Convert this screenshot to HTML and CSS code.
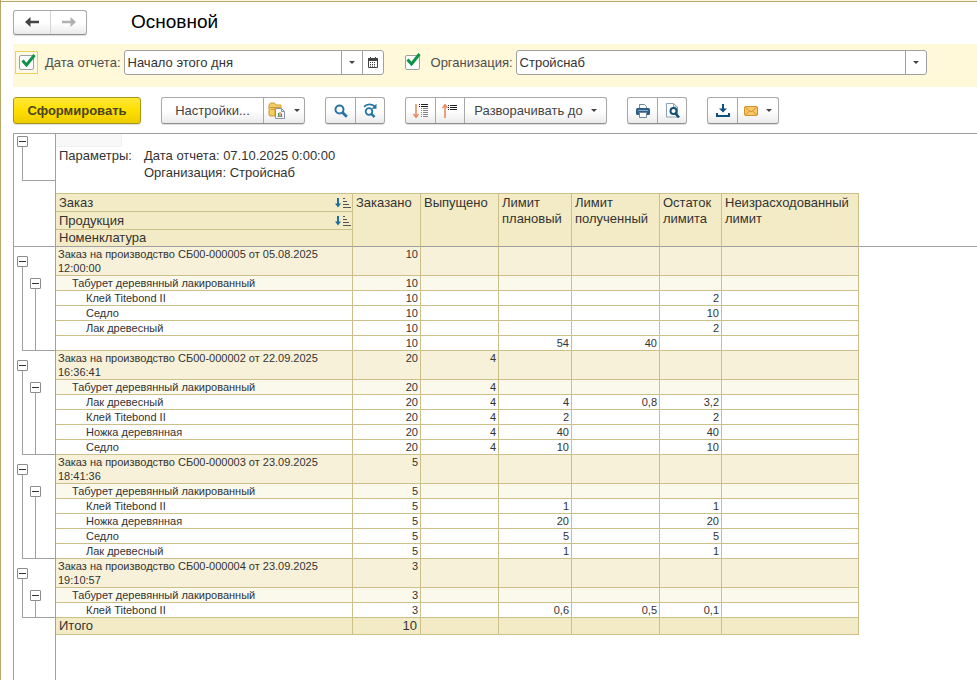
FILE: index.html
```html
<!DOCTYPE html>
<html lang="ru">
<head>
<meta charset="utf-8">
<title>Основной</title>
<link rel="stylesheet" href="styles.css">
</head>
<body>
<main class="window">
  <header class="titlebar">
    <div class="btn-group nav">
      <button type="button" aria-label="Назад"><svg width="14" height="10" viewBox="0 0 14 10"><path d="M0 5 5.500 0v3.700H14v2.600H5.500V10z" fill="#444"/></svg></button>
      <button type="button" aria-label="Вперед" disabled><svg width="14" height="10" viewBox="0 0 14 10"><path d="M14 5 8.500 0v3.700H0v2.600h8.500V10z" fill="#b0b0b0"/></svg></button>
    </div>
    <h1>Основной</h1>
  </header>

  <form class="filters">
    <span class="check focused"><input type="checkbox" id="use-date" checked aria-label="Использовать дату"><svg class="tick" width="15" height="13" viewBox="0 0 15 13"><path d="M1.500 6.500 5.500 11 13.500 1" fill="none" stroke="#0e9347" stroke-width="3"/></svg></span>
    <label for="date">Дата отчета:</label>
    <div class="field date-field">
      <input type="text" id="date" value="Начало этого дня">
      <button type="button" aria-label="Выбрать"><i class="caret"></i></button>
      <button type="button" aria-label="Календарь"><svg width="10" height="11" viewBox="0 0 10 11"><path d="M.5 1.500h9v9h-9z" fill="#fff" stroke="#444"/><path d="M0 1h10v3H0zM2 0h1v2H2zM7 0h1v2H7z" fill="#444"/><path d="M2 5.500h6M2 7.500h6M2 9.200h6" stroke="#444" stroke-dasharray="1 1"/></svg></button>
    </div>
    <span class="check"><input type="checkbox" id="use-org" checked aria-label="Использовать организацию"><svg class="tick" width="15" height="13" viewBox="0 0 15 13"><path d="M1.500 6.500 5.500 11 13.500 1" fill="none" stroke="#0e9347" stroke-width="3"/></svg></span>
    <label for="org">Организация:</label>
    <div class="field org-field">
      <input type="text" id="org" value="Стройснаб">
      <button type="button" aria-label="Выбрать организацию"><i class="caret"></i></button>
    </div>
  </form>

  <div class="toolbar">
    <button type="button" class="primary">Сформировать</button>
    <div class="btn-group">
      <button type="button" class="settings">Настройки...</button>
      <button type="button" class="menu" aria-label="Варианты отчета"><svg width="18" height="17" viewBox="0 0 18 17"><path d="M1 13V3l1.500-2h4L8 3h5v3H7v8H2z" fill="#f3cc62" stroke="#cf9a34"/><path d="M1.500 5.500H12M3 7.500h4" stroke="#cf9a34"/><path d="M7.500 6.500h6l3 3v7h-9z" fill="#fff" stroke="#8292a4"/><path d="M13.500 6.500v3h3" fill="none" stroke="#8292a4"/><path d="M9.500 14.500h5" stroke="#888"/><path d="M10 11h1v3h-1z" fill="#3b9b55"/><path d="M11.500 10h1v4h-1z" fill="#d64b3b"/><path d="M13 11.500h1V14h-1z" fill="#d64b3b"/></svg><i class="caret"></i></button>
    </div>
    <div class="btn-group">
      <button type="button" class="icon" aria-label="Найти"><svg width="14" height="14" viewBox="0 0 14 14"><circle cx="5.500" cy="5.500" r="4" fill="none" stroke="#2673a5" stroke-width="2"/><path d="m8.500 8.500 4.300 4.300" stroke="#2673a5" stroke-width="2.800"/></svg></button>
      <button type="button" class="icon" aria-label="Найти далее"><svg width="15" height="15" viewBox="0 0 15 15"><circle cx="6" cy="8.500" r="3.300" fill="none" stroke="#2673a5" stroke-width="1.800"/><path d="m8.300 10.800 3.300 3.300" stroke="#2673a5" stroke-width="2.400"/><path d="M1 3.800C4 .5 9 .5 12 3.700" fill="none" stroke="#2673a5" stroke-width="1.800"/><path d="M13.500 .8v5h-5z" fill="#2673a5"/></svg></button>
    </div>
    <div class="btn-group">
      <button type="button" class="icon" aria-label="Развернуть"><svg width="16" height="16" viewBox="0 0 16 16"><path d="M3 1v13" stroke="#e9825a" stroke-width="1.500"/><path d="m.5 11 2.500 3.500L5.500 11" fill="none" stroke="#e9825a" stroke-width="1.300"/><path d="M6 1.500h1M8 1.500h7M6 3.500h1M8 3.500h7" stroke="#222"/><path d="M8 5.500h1M10 5.500h5M8 7.500h1M10 7.500h5M8 9.500h1M10 9.500h5M8 11.500h1M10 11.500h5M8 13.500h1M10 13.500h5" stroke="#888"/></svg></button>
      <button type="button" class="icon" aria-label="Свернуть"><svg width="16" height="16" viewBox="0 0 16 16"><path d="M3 2v13" stroke="#e9825a" stroke-width="1.500"/><path d="M.5 5 3 1.500 5.500 5" fill="none" stroke="#e9825a" stroke-width="1.300"/><path d="M6 2.500h1M8 2.500h7M6 4.500h1M8 4.500h7M6 6.500h1M8 6.500h7" stroke="#222"/></svg></button>
      <button type="button" class="expand">Разворачивать до<i class="caret"></i></button>
    </div>
    <div class="btn-group">
      <button type="button" class="icon" aria-label="Печать"><svg width="14" height="14" viewBox="0 0 14 14"><path d="M3.500 5V.5h5l2 2V5" fill="#fff" stroke="#718698"/><rect y="4" width="14" height="7" rx="1.500" fill="#2f5f8a"/><path d="M2 6.500h10" stroke="#8eabc4"/><path d="M3.500 8.500h7v5h-7z" fill="#fff" stroke="#718698"/></svg></button>
      <button type="button" class="icon" aria-label="Просмотр"><svg width="15" height="15" viewBox="0 0 15 15"><path d="M1.500 .5h7l4 3.500v10h-11z" fill="#fff" stroke="#8da0b2"/><path d="M8.500 .5V4h4" fill="none" stroke="#8da0b2"/><circle cx="8.500" cy="8" r="3" fill="#fff" stroke="#0f5078" stroke-width="2"/><path d="m10.500 10.500 3.500 4" stroke="#0f5078" stroke-width="2.500"/></svg></button>
    </div>
    <div class="btn-group">
      <button type="button" class="icon" aria-label="Сохранить"><svg width="14" height="13" viewBox="0 0 14 13"><path d="M7 0v7" stroke="#0f5078" stroke-width="2"/><path d="M3 4.500h8L7 8.500z" fill="#0f5078"/><path d="M1 9v3h12V9" fill="none" stroke="#0f5078" stroke-width="2"/></svg></button>
      <button type="button" class="menu" aria-label="Отправить"><svg width="14" height="10" viewBox="0 0 14 10"><rect x=".5" y=".5" width="13" height="9" rx="1" fill="#f8c869" stroke="#d78f2c"/><path d="m1 1 6 5 6-5M1 9l4.500-4M13 9 8.500 5" fill="none" stroke="#d78f2c"/></svg><i class="caret"></i></button>
    </div>
  </div>

  <section class="sheet">
    <div class="gutter">
      <div class="branch params-branch"><button type="button" class="toggle" aria-label="Свернуть"></button><div class="stem"></div></div>
      <div class="branch" style="--rows:5"><button type="button" class="toggle" aria-label="Свернуть"></button><div class="stem"><button type="button" class="toggle" aria-label="Свернуть"></button><div class="twig"></div></div></div>
      <div class="branch" style="--rows:5"><button type="button" class="toggle" aria-label="Свернуть"></button><div class="stem"><button type="button" class="toggle" aria-label="Свернуть"></button><div class="twig"></div></div></div>
      <div class="branch" style="--rows:5"><button type="button" class="toggle" aria-label="Свернуть"></button><div class="stem"><button type="button" class="toggle" aria-label="Свернуть"></button><div class="twig"></div></div></div>
      <div class="branch" style="--rows:2"><button type="button" class="toggle" aria-label="Свернуть"></button><div class="stem"><button type="button" class="toggle" aria-label="Свернуть"></button><div class="twig"></div></div></div>
    </div>
    <div class="content">
      <div class="cursor"></div>
      <dl class="params">
        <dt>Параметры:</dt>
        <dd>Дата отчета: 07.10.2025 0:00:00</dd>
        <dd>Организация: Стройснаб</dd>
      </dl>
      <table>
        <colgroup><col class="c-name"><col class="c-ordered"><col class="c-released"><col class="c-plan"><col class="c-got"><col class="c-rest"><col class="c-unspent"><col></colgroup>
        <thead>
          <tr><th><div class="sortable">Заказ<svg width="16" height="12" viewBox="0 0 16 12"><path d="M3 1v7" stroke="#1f6f99" stroke-width="2"/><path d="M0 6.500h6L3 10.500z" fill="#1f6f99"/><path d="M8 1.500h2M8 4.500h4M8 7.500h6M8 10.500h8" stroke="#555"/></svg></div></th><th rowspan="3">Заказано</th><th rowspan="3">Выпущено</th><th rowspan="3">Лимит плановый</th><th rowspan="3">Лимит полученный</th><th rowspan="3">Остаток лимита</th><th rowspan="3">Неизрасходованный лимит</th><td rowspan="3" class="filler"></td></tr>
          <tr><th><div class="sortable">Продукция<svg width="16" height="12" viewBox="0 0 16 12"><path d="M3 1v7" stroke="#1f6f99" stroke-width="2"/><path d="M0 6.500h6L3 10.500z" fill="#1f6f99"/><path d="M8 1.500h2M8 4.500h4M8 7.500h6M8 10.500h8" stroke="#555"/></svg></div></th></tr>
          <tr><th>Номенклатура</th></tr>
        </thead>
        <tbody>
          <tr class="order"><td>Заказ на производство СБ00-000005 от 05.08.2025 12:00:00</td><td>10</td><td></td><td></td><td></td><td></td><td></td></tr>
          <tr class="product"><td>Табурет деревянный лакированный</td><td>10</td><td></td><td></td><td></td><td></td><td></td></tr>
          <tr><td>Клей Titebond II</td><td>10</td><td></td><td></td><td></td><td>2</td><td></td></tr>
          <tr><td>Седло</td><td>10</td><td></td><td></td><td></td><td>10</td><td></td></tr>
          <tr><td>Лак древесный</td><td>10</td><td></td><td></td><td></td><td>2</td><td></td></tr>
          <tr><td></td><td>10</td><td></td><td>54</td><td>40</td><td></td><td></td></tr>
        </tbody>
        <tbody>
          <tr class="order"><td>Заказ на производство СБ00-000002 от 22.09.2025 16:36:41</td><td>20</td><td>4</td><td></td><td></td><td></td><td></td></tr>
          <tr class="product"><td>Табурет деревянный лакированный</td><td>20</td><td>4</td><td></td><td></td><td></td><td></td></tr>
          <tr><td>Лак древесный</td><td>20</td><td>4</td><td>4</td><td>0,8</td><td>3,2</td><td></td></tr>
          <tr><td>Клей Titebond II</td><td>20</td><td>4</td><td>2</td><td></td><td>2</td><td></td></tr>
          <tr><td>Ножка деревянная</td><td>20</td><td>4</td><td>40</td><td></td><td>40</td><td></td></tr>
          <tr><td>Седло</td><td>20</td><td>4</td><td>10</td><td></td><td>10</td><td></td></tr>
        </tbody>
        <tbody>
          <tr class="order"><td>Заказ на производство СБ00-000003 от 23.09.2025 18:41:36</td><td>5</td><td></td><td></td><td></td><td></td><td></td></tr>
          <tr class="product"><td>Табурет деревянный лакированный</td><td>5</td><td></td><td></td><td></td><td></td><td></td></tr>
          <tr><td>Клей Titebond II</td><td>5</td><td></td><td>1</td><td></td><td>1</td><td></td></tr>
          <tr><td>Ножка деревянная</td><td>5</td><td></td><td>20</td><td></td><td>20</td><td></td></tr>
          <tr><td>Седло</td><td>5</td><td></td><td>5</td><td></td><td>5</td><td></td></tr>
          <tr><td>Лак древесный</td><td>5</td><td></td><td>1</td><td></td><td>1</td><td></td></tr>
        </tbody>
        <tbody>
          <tr class="order"><td>Заказ на производство СБ00-000004 от 23.09.2025 19:10:57</td><td>3</td><td></td><td></td><td></td><td></td><td></td></tr>
          <tr class="product"><td>Табурет деревянный лакированный</td><td>3</td><td></td><td></td><td></td><td></td><td></td></tr>
          <tr><td>Клей Titebond II</td><td>3</td><td></td><td>0,6</td><td>0,5</td><td>0,1</td><td></td></tr>
        </tbody>
        <tfoot>
          <tr><td>Итого</td><td>10</td><td></td><td></td><td></td><td></td><td></td></tr>
        </tfoot>
      </table>
    </div>
  </section>
</main>
</body>
</html>
```
FILE: styles.css
```css
:root {
  --line: #a0a0a0;
  --grid: #cbc08a;
  --text: #333;
}

* { box-sizing: border-box; }

body {
  margin: 0;
  background: #fff;
  color: var(--text);
  font: 13px/16px "Liberation Sans", Arial, sans-serif;
}

button, input { font: inherit; color: inherit; }
svg { display: block; flex: none; }

.window {
  display: flex;
  flex-direction: column;
  min-height: 100vh;
  padding: 8px 0 0 12px;
  border-left: 1px solid #b5a76c;
  background: linear-gradient(#fbf6df 1px, #b5a76c 1px 2px, #fff 2px);
}

.titlebar {
  display: flex;
  align-items: center;
  gap: 44px;
  height: 28px;
}

h1 {
  margin: 0;
  color: #000;
  font-size: 19px;
  font-weight: normal;
  line-height: 24px;
}

.btn-group {
  display: flex;
  border: 1px solid #a8a8a8;
  border-bottom-color: #8e8e8e;
  border-radius: 3px;
  background: linear-gradient(#fff 50%, #ebebeb);
  box-shadow: 0 1px 1px #ddd;
}

.btn-group button {
  display: flex;
  align-items: center;
  justify-content: center;
  height: 25px;
  padding: 0;
  border: 0;
  background: none;
}

.btn-group button + button { border-left: 1px solid #a8a8a8; }
.btn-group.nav button { width: 36px; height: 23px; }
.btn-group.nav button + button { border-left-color: #d4d4d4; }

.filters {
  display: flex;
  align-items: center;
  height: 43px;
  margin-top: 8px;
  padding: 0 50px 6px 2px;
  background: #fff8d9;
}

.check {
  position: relative;
  display: flex;
  align-items: center;
  justify-content: center;
  width: 23px;
  height: 23px;
}

.check.focused { border: 1px solid #e8d25c; background: #fffbe6; }

.check input {
  appearance: none;
  width: 15px;
  height: 15px;
  margin: 0;
  border: 1px solid #a0a0a0;
  border-radius: 2px;
  background: #fff;
}

.tick {
  position: absolute;
  top: 2px;
  left: 5px;
  pointer-events: none;
}

.filters label { margin: 0 3px 0 7px; color: #4d4d4d; }

.field {
  display: flex;
  height: 25px;
  border: 1px solid #a0a0a0;
  border-radius: 3px;
  background: #fff;
}

.field input {
  flex: 1;
  min-width: 0;
  padding: 0 3px;
  border: 0;
  outline: 0;
  background: none;
}

.field button {
  display: flex;
  align-items: center;
  justify-content: center;
  width: 21px;
  padding: 0;
  border: 0;
  border-left: 1px solid #a0a0a0;
  background: none;
}

.date-field { width: 260px; margin-right: 17px; }
.org-field { flex: 1; }

.caret {
  border: 3px solid transparent;
  border-top-color: #444;
  border-bottom: 0;
}

.toolbar {
  display: flex;
  gap: 20px;
  margin-top: 10px;
}

.primary {
  width: 128px;
  height: 27px;
  padding: 0;
  border: 1px solid #a8961c;
  border-radius: 3px;
  background: linear-gradient(#ffe838, #ffdf00 50%, #edcc00);
  box-shadow: 0 1px 1px #ddd;
  color: #4a4420;
  font-weight: bold;
}

.toolbar .btn-group button { color: #444; }
.toolbar .settings { width: 101px; }
.toolbar .icon { width: 29px; }
.toolbar .menu { width: 41px; gap: 8px; }
.toolbar .expand { width: 142px; gap: 8px; }

.sheet {
  display: flex;
  flex: 1;
  margin-top: 9px;
  border-top: 1px solid var(--line);
}

.gutter {
  flex: none;
  width: 43px;
  border: solid var(--line);
  border-width: 0 1px;
}

.branch {
  display: flex;
  flex-direction: column;
  height: calc(29px + 15px * var(--rows));
  padding: 9px 0 0 3px;
}

.params-branch {
  height: 113px;
  padding: 2px 0 65px 3px;
  border-bottom: 1px solid var(--line);
}

.toggle {
  flex: none;
  width: 11px;
  height: 11px;
  padding: 0;
  border: 1px solid #8c8c8c;
  border-radius: 1px;
  background: linear-gradient(#333, #333) center / 7px 1px no-repeat #fff;
}

.stem {
  display: flex;
  flex: 1;
  flex-direction: column;
  margin-left: 5px;
  border: solid var(--line);
  border-width: 0 0 1px 1px;
}

.stem .toggle { margin: 11px 0 0 7px; }
.twig { flex: 1; margin-left: 12px; border-left: 1px solid var(--line); }

.content { flex: 1; min-width: 0; }

.cursor {
  width: 66px;
  height: 13px;
  border: solid #f1f1f1;
  border-width: 0 1px 1px 0;
  background: #f8f8f8;
}

.params {
  display: grid;
  grid-template-columns: 85px 1fr;
  margin: 0;
  padding: 0 0 12px 3px;
  line-height: 17px;
}

.params dd { grid-column: 2; margin: 0; }
.params dt { grid-row: 1; }

table {
  width: 100%;
  border-spacing: 0;
  table-layout: fixed;
}

.c-name { width: 297px; }
.c-ordered { width: 68px; }
.c-released { width: 78px; }
.c-plan { width: 73px; }
.c-got { width: 88px; }
.c-rest { width: 62px; }
.c-unspent { width: 137px; }

th, td {
  padding: 0 3px;
  border: solid var(--grid);
  border-width: 0 1px 1px 0;
  vertical-align: top;
}

th {
  background: #f3ebc5;
  font-weight: normal;
  line-height: 16px;
  text-align: left;
}

thead tr:first-child th { border-top-width: 1px; }
thead [rowspan], thead tr:last-child th { border-bottom-color: var(--line); }
thead th[rowspan] { padding-top: 1px; }
thead .filler { border-right: 0; }

.sortable {
  display: flex;
  align-items: center;
  justify-content: space-between;
  height: 17px;
  margin-right: -2px;
}

tbody {
  font-size: 11px;
  line-height: 14px;
}

tbody td { height: 15px; padding: 0 2px; text-align: right; }
tbody td:first-child { padding-left: 30px; text-align: left; }
tbody .order td { background: #f7f1d9; }
tbody .order td:first-child { padding: 0 20px 0 2px; }
tbody .product td { background: #fbf8ec; }
tbody .product td:first-child { padding-left: 16px; }

tfoot td { background: #f3ebc5; text-align: right; }
tfoot td:first-child { text-align: left; }
```
